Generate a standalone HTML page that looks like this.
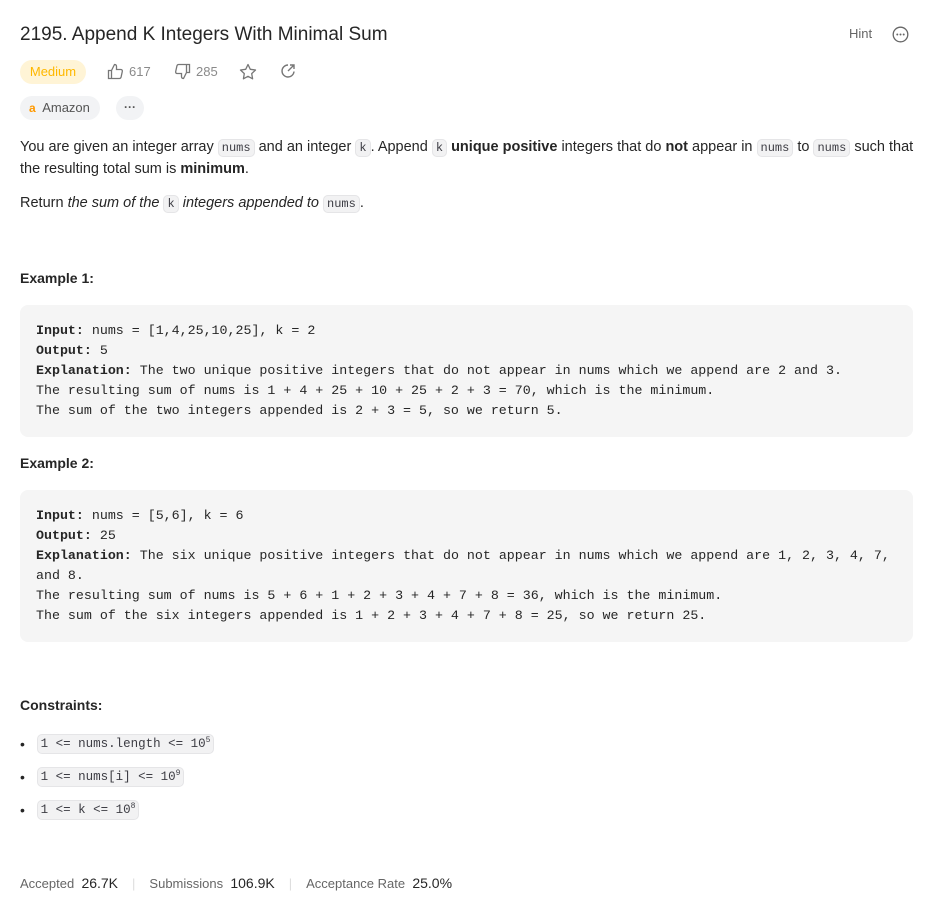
<!DOCTYPE html>
<html><head><meta charset="utf-8"><style>
*{box-sizing:border-box;margin:0;padding:0}
body{width:933px;height:907px;background:#fff;font-family:"Liberation Sans",sans-serif;color:#262626;font-size:14px;position:relative;overflow:hidden}
.abs{position:absolute}
code{font-family:"Liberation Mono",monospace;font-size:12px;background:#f2f2f3;border:1px solid #e5e5e7;border-radius:5px;padding:1px 3px;color:#3c3c43}
.pre{position:absolute;left:20px;width:893px;background:#f5f5f5;border-radius:8px;padding:16px;font-family:"Liberation Mono",monospace;font-size:13.3px;line-height:20px;color:#262626;white-space:pre}
.pre b{font-weight:bold}
h4{position:absolute;left:20px;font-size:14px;font-weight:bold}
.icon{display:inline-flex;align-items:center;gap:5px;color:#8a8a8a;font-size:13px}
.li{height:33px;line-height:20px;display:flex;align-items:center}
.li code{font-size:12.5px;line-height:16px;height:20px;padding:1px 3px 0}
.li sup{font-size:8px;line-height:0;vertical-align:5px}
</style></head><body>
<div class="abs" style="left:20px;top:24px;font-size:19px;color:#262626">2195. Append K Integers With Minimal Sum</div>
<div class="abs" style="left:849px;top:26px;font-size:13px;color:#666">Hint</div>
<svg class="abs" style="left:892px;top:26px" width="17" height="17" viewBox="0 0 17 17"><circle cx="8.5" cy="8.5" r="7.3" fill="none" stroke="#666" stroke-width="1.3"/><circle cx="5.3" cy="8.5" r="1" fill="#666"/><circle cx="8.5" cy="8.5" r="1" fill="#666"/><circle cx="11.7" cy="8.5" r="1" fill="#666"/></svg>
<div class="abs" style="left:20px;top:60px;width:66px;height:24px;border-radius:12px;background:#fff4d6;color:#ffb800;font-size:13px;line-height:24px;text-align:center">Medium</div>
<div class="abs icon" style="left:107px;top:63px"><svg width="17" height="17" viewBox="0 0 17 17" fill="none" stroke="#777" stroke-width="1.3"><path d="M1.5 7.5h3v8h-3zM4.5 7.5l3-6c1.5 0 2 1 2 2v3h4.5c1 0 1.5 1 1.3 2l-1.2 5.5c-.2.8-.8 1.5-1.7 1.5H4.5"/></svg>617</div>
<div class="abs icon" style="left:174px;top:63px"><svg width="17" height="17" viewBox="0 0 17 17" fill="none" stroke="#777" stroke-width="1.3"><path d="M15.5 9.5h-3v-8h3zM12.5 9.5l-3 6c-1.5 0-2-1-2-2v-3H3c-1 0-1.5-1-1.3-2l1.2-5.5c.2-.8.8-1.5 1.7-1.5h7.9"/></svg>285</div>
<svg class="abs" style="left:239px;top:63px" width="18" height="17" viewBox="0 0 18 17" fill="none" stroke="#777" stroke-width="1.3"><path d="M9 1.5l2.3 4.8 5.2.7-3.8 3.6.9 5.2L9 13.3l-4.6 2.5.9-5.2L1.5 7l5.2-.7z" stroke-linejoin="round"/></svg>
<svg class="abs" style="left:280px;top:63px" width="16" height="16" viewBox="0 0 16 16" fill="none" stroke="#777" stroke-width="1.4"><path d="M14 8.5A6 6 0 1 1 8 2"/><path d="M10 2h4v4M14 2L8 8"/></svg>
<div class="abs" style="left:20px;top:96px;width:80px;height:24px;border-radius:12px;background:#f2f3f5;font-size:13px;line-height:24px;color:#555;padding-left:9px"><span style="color:#f90;font-weight:bold;font-size:12px">a</span>&nbsp; Amazon</div>
<div class="abs" style="left:116px;top:96px;width:28px;height:24px;border-radius:12px;background:#f2f3f5;font-size:12px;line-height:22px;color:#555;text-align:center;font-weight:bold">···</div>
<div class="abs" style="left:20px;top:137px;width:895px;line-height:21px;font-size:14.5px">You are given an integer array <code>nums</code> and an integer <code>k</code>. Append <code>k</code> <b>unique positive</b> integers that do <b>not</b> appear in <code>nums</code> to <code>nums</code> such that the resulting total sum is <b>minimum</b>.</div>
<div class="abs" style="left:20px;top:195px;font-size:14.5px">Return <i>the sum of the</i> <code>k</code> <i>integers appended to</i> <code>nums</code>.</div>
<h4 style="top:270px">Example 1:</h4>
<div class="pre" style="top:305px;height:132px"><b>Input:</b> nums = [1,4,25,10,25], k = 2
<b>Output:</b> 5
<b>Explanation:</b> The two unique positive integers that do not appear in nums which we append are 2 and 3.
The resulting sum of nums is 1 + 4 + 25 + 10 + 25 + 2 + 3 = 70, which is the minimum.
The sum of the two integers appended is 2 + 3 = 5, so we return 5.</div>
<h4 style="top:455px">Example 2:</h4>
<div class="pre" style="top:490px;height:152px"><b>Input:</b> nums = [5,6], k = 6
<b>Output:</b> 25
<b>Explanation:</b> The six unique positive integers that do not appear in nums which we append are 1, 2, 3, 4, 7,
and 8.
The resulting sum of nums is 5 + 6 + 1 + 2 + 3 + 4 + 7 + 8 = 36, which is the minimum.
The sum of the six integers appended is 1 + 2 + 3 + 4 + 7 + 8 = 25, so we return 25.</div>
<h4 style="top:697px">Constraints:</h4>
<div class="abs" style="left:20px;top:727px">
<div class="li">•&nbsp;&nbsp;&nbsp;<code>1 &lt;= nums.length &lt;= 10<sup>5</sup></code></div>
<div class="li">•&nbsp;&nbsp;&nbsp;<code>1 &lt;= nums[i] &lt;= 10<sup>9</sup></code></div>
<div class="li">•&nbsp;&nbsp;&nbsp;<code>1 &lt;= k &lt;= 10<sup>8</sup></code></div>
</div>
<div class="abs" style="left:20px;top:875px;font-size:13px;color:#666;white-space:nowrap">Accepted&nbsp;&nbsp;<span style="color:#262626;font-size:14px">26.7K</span><span style="color:#ddd;margin:0 14px">|</span>Submissions&nbsp;&nbsp;<span style="color:#262626;font-size:14px">106.9K</span><span style="color:#ddd;margin:0 14px">|</span>Acceptance Rate&nbsp;&nbsp;<span style="color:#262626;font-size:14px">25.0%</span></div>
</body></html>
